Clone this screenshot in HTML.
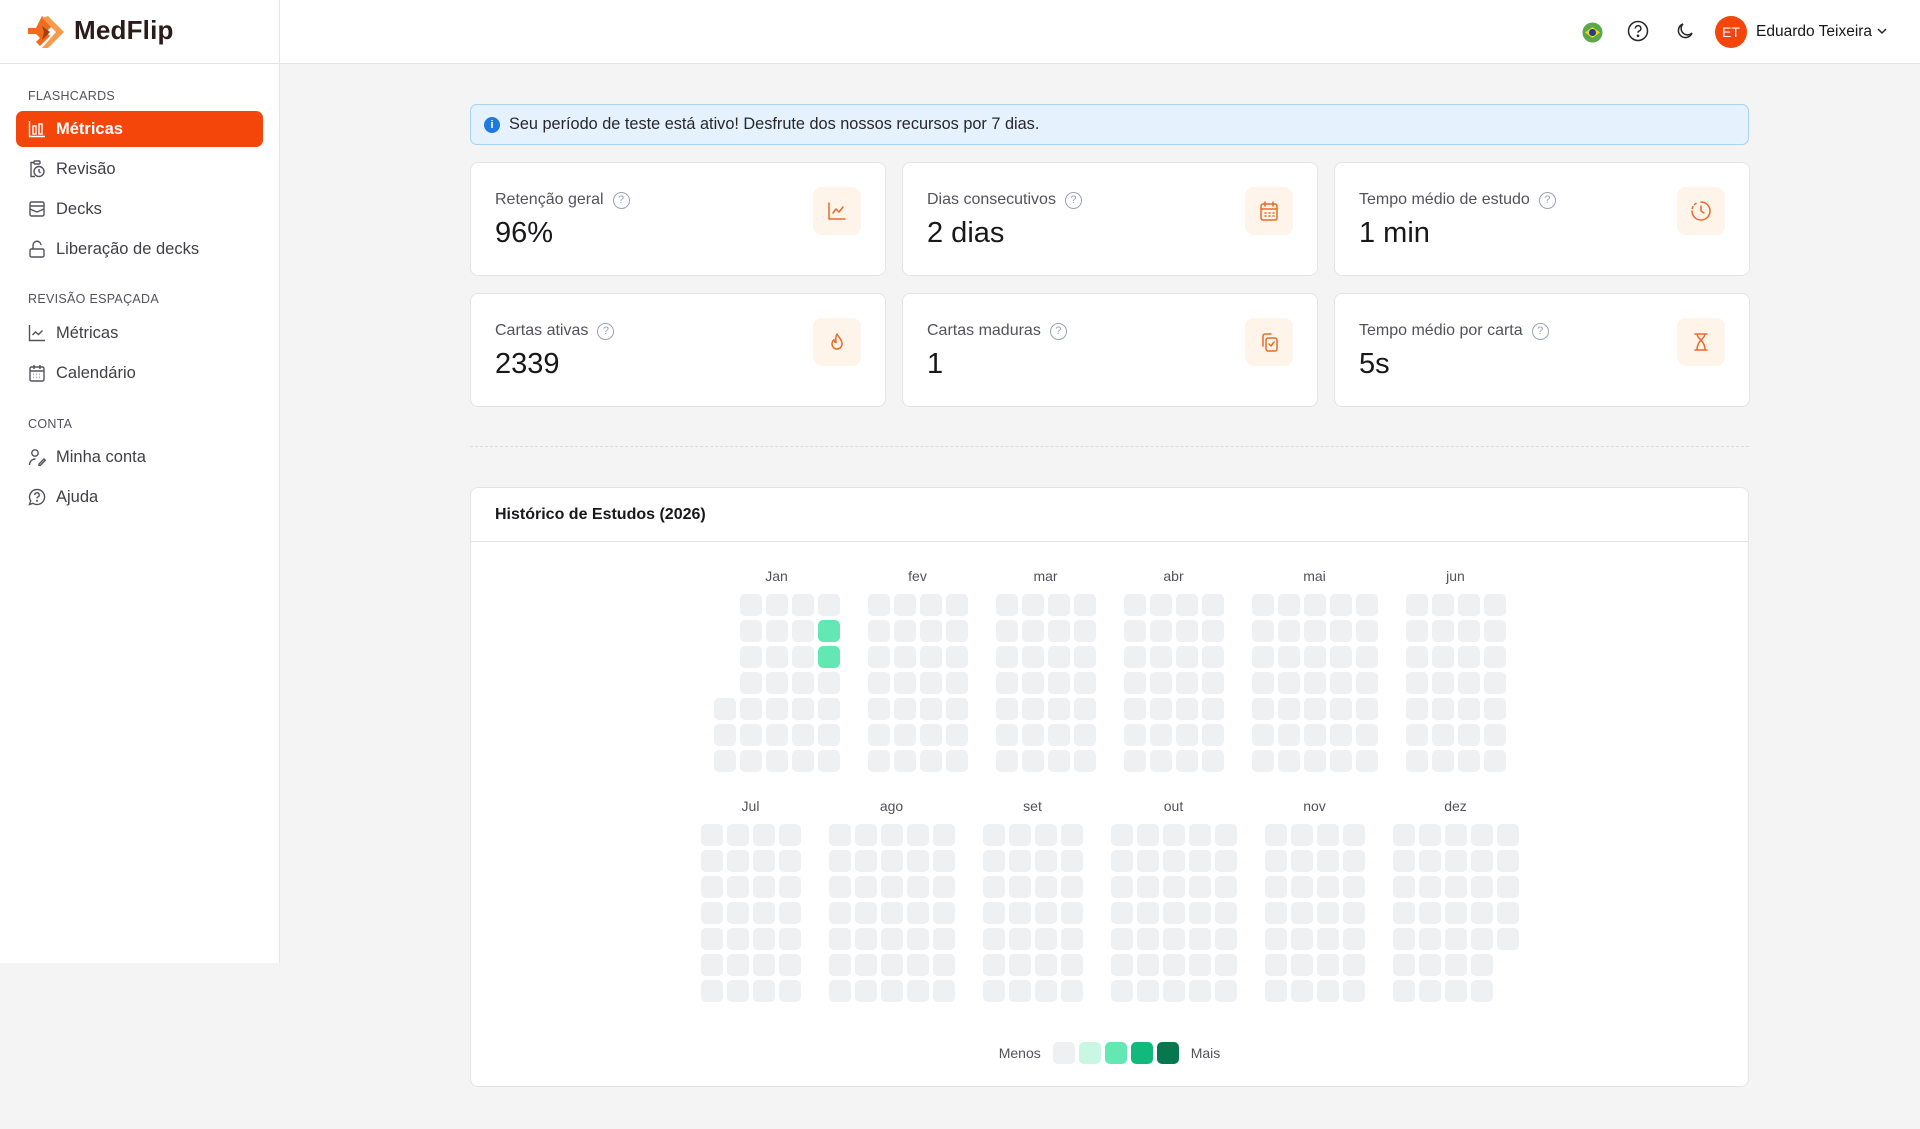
<!DOCTYPE html>
<html><head><meta charset="utf-8">
<style>
*{box-sizing:border-box;margin:0;padding:0}
body{width:1920px;height:1129px;background:#f4f4f5;font-family:"Liberation Sans",sans-serif;color:#27272a;position:relative;overflow:hidden}
.side{position:absolute;left:0;top:0;width:280px;height:963px;background:#fff;border-right:1px solid #e4e4e7}
.top{position:absolute;left:0;top:0;width:1920px;height:64px;background:#fff;border-bottom:1px solid #e4e4e7}
.sidehead{position:absolute;left:0;top:0;width:280px;height:64px;border-right:1px solid #e4e4e7;border-bottom:1px solid #e4e4e7;background:#fff}
.logo{position:absolute;left:26px;top:14px}
.logotxt{position:absolute;left:74px;top:15px;font-size:26px;font-weight:bold;color:#2b1b1b;letter-spacing:0.2px}
.sec{position:absolute;left:28px;font-size:12.5px;color:#52525b;letter-spacing:0.3px}
.item{position:absolute;left:16px;width:247px;height:36px;border-radius:7px;font-size:16.5px;color:#3f3f46;display:flex;align-items:center;padding-left:12px}
.item svg{width:18px;height:18px;margin-right:10px;fill:none;stroke:#52525b;stroke-width:1.4}
.item.act{background:#f4460b;color:#fff;font-weight:bold}
.item.act svg{stroke:#fff}
.banner{position:absolute;left:470px;top:104px;width:1279px;height:41px;background:#e5f2fd;border:1px solid #a8d3f2;border-radius:7px;display:flex;align-items:center;padding-left:13px;font-size:16.3px;color:#27272a}
.banner .i{width:16px;height:16px;border-radius:50%;background:#1f7ae0;color:#fff;font-size:11px;font-weight:bold;display:flex;align-items:center;justify-content:center;margin-right:9px}
.card{position:absolute;width:416px;height:114px;background:#fff;border:1px solid #e4e4e7;border-radius:8px}
.card .t{position:absolute;left:24px;top:28px;font-size:16px;color:#52525b;display:flex;align-items:center}
.card .q{display:inline-block;width:17px;height:17px;border:1.3px solid #9ca3af;border-radius:50%;font-size:11px;color:#9ca3af;text-align:center;line-height:15px;margin-left:9px}
.card .v{position:absolute;left:24px;top:54px;font-size:29px;color:#18181b}
.card .ic{position:absolute;right:24px;top:24px;width:48px;height:48px;background:#fff4ea;border-radius:9px;display:flex;align-items:center;justify-content:center}
.card .ic svg{width:22px;height:22px;fill:none;stroke:#ea6a2a;stroke-width:1.5;stroke-linecap:round;stroke-linejoin:round}
.dash{position:absolute;left:470px;top:446px;width:1279px;border-top:1px dashed #dcdce0}
.hist{position:absolute;left:470px;top:487px;width:1279px;height:600px;background:#fff;border:1px solid #e4e4e7;border-radius:8px}
.hist .h{height:54px;border-bottom:1px solid #e4e4e7;font-size:16px;font-weight:bold;padding:18px 24px;color:#18181b}
.row{position:absolute;left:0;width:100%;display:flex;justify-content:center;gap:28px}
.mon{display:flex;flex-direction:column;align-items:center}
.mon .l{font-size:14px;color:#52525b;height:18px;margin-bottom:8px}
.grid{display:grid;grid-template-rows:repeat(7,22px);grid-auto-flow:column;grid-auto-columns:22px;gap:4px}
.c{background:#eff0f2;border-radius:5px}
.c.h0{visibility:hidden}
.c.g{background:#63e8b4}
.leg{position:absolute;left:0;width:100%;top:554px;display:flex;justify-content:center;align-items:center;font-size:14px;color:#52525b}
.leg span.s{width:22px;height:22px;border-radius:5px;margin-right:4px;display:inline-block}
</style></head><body>
<div class="top"></div>
<div class="side"></div>
<div class="sidehead">
<svg class="logo" width="44" height="36" viewBox="0 0 44 36">
<path d="M16 2 L26 12 L20 18 L24 22 L14 32 L10 28 L14 24 L10 20 L2 20 L2 14 L10 14 Z" fill="#f26a1b"/>
<path d="M22 2 L38 18 L22 34 L16 34 L30 18 L16 4 Z" fill="#f79a4a"/>
<path d="M16 12 L24 18 L16 26 L18 18 Z" fill="#a83a12"/>
</svg>
<div class="logotxt">MedFlip</div>
</div>
<svg style="position:absolute;left:1582px;top:22px" width="21" height="21" viewBox="0 0 21 21"><circle cx="10.5" cy="10.5" r="10" fill="#5aa84a"/><path d="M3 10.5 L10.5 5 L18 10.5 L10.5 16Z" fill="#f5d21a"/><circle cx="10.5" cy="10.5" r="3.5" fill="#203c8a"/></svg>
<svg style="position:absolute;left:1627px;top:20px" width="22" height="22" viewBox="0 0 22 22" fill="none" stroke="#27272a" stroke-width="1.5"><circle cx="11" cy="11" r="9.5"/><path d="M8.3 8.5a2.8 2.8 0 1 1 3.8 2.6c-.8.3-1.1.9-1.1 1.7"/><circle cx="11" cy="15.8" r=".6" fill="#27272a"/></svg>
<svg style="position:absolute;left:1675px;top:22px" width="19" height="19" viewBox="0 0 19 19" fill="none" stroke="#27272a" stroke-width="1.5"><path d="M8 2a7 7 0 1 0 9 9A6 6 0 0 1 8 2z"/></svg>
<div style="position:absolute;left:1715px;top:16px;width:32px;height:32px;border-radius:50%;background:#f4460b;color:#fff;font-size:14px;display:flex;align-items:center;justify-content:center">ET</div>
<div style="position:absolute;left:1756px;top:23px;font-size:15.5px;color:#18181b">Eduardo Teixeira</div>
<svg style="position:absolute;left:1876px;top:27px" width="12" height="8" viewBox="0 0 12 8" fill="none" stroke="#27272a" stroke-width="1.5"><path d="M2 2l4 4 4-4"/></svg>

<div class="sec" style="top:89px">FLASHCARDS</div>
<div class="item act" style="top:111px"><svg viewBox="0 0 18 18"><path d="M1.5 1v15.5H17"/><rect x="5" y="6" width="3" height="8"/><rect x="11" y="4" width="3" height="10"/></svg>Métricas</div>
<div class="item" style="top:151px"><svg viewBox="0 0 18 18"><path d="M6 2.5H3v14h4"/><rect x="6" y="1" width="6" height="3" rx="1"/><circle cx="11" cy="11.5" r="5"/><path d="M11 9v2.5l1.5 1.5"/></svg>Revisão</div>
<div class="item" style="top:191px"><svg viewBox="0 0 18 18"><rect x="2" y="2" width="14" height="14" rx="1.5"/><path d="M2 6h14M2 9l7 3 7-3"/></svg>Decks</div>
<div class="item" style="top:231px"><svg viewBox="0 0 18 18"><rect x="2" y="9" width="14" height="8" rx="1.5"/><path d="M5 9V5.5a4 4 0 0 1 8-0.5"/></svg>Liberação de decks</div>
<div class="sec" style="top:292px">REVISÃO ESPAÇADA</div>
<div class="item" style="top:315px"><svg viewBox="0 0 18 18"><path d="M1.5 1v15.5H17"/><path d="M4.5 11l3-3 3 2.5 4-4"/></svg>Métricas</div>
<div class="item" style="top:355px"><svg viewBox="0 0 18 18"><rect x="2" y="3" width="14" height="14" rx="1.5"/><path d="M2 7h14M6 1v4M12 1v4"/><path d="M5.5 10.5h.5M8.5 10.5h.5M11.5 10.5h.5M5.5 13.5h.5M8.5 13.5h.5M11.5 13.5h.5"/></svg>Calendário</div>
<div class="sec" style="top:417px">CONTA</div>
<div class="item" style="top:439px"><svg viewBox="0 0 18 18"><circle cx="7" cy="5" r="3.2"/><path d="M1.5 17c0-3.5 2.5-6 6-6"/><path d="M11 16l5-5 1.3 1.3-5 5H11z"/></svg>Minha conta</div>
<div class="item" style="top:479px"><svg viewBox="0 0 18 18"><path d="M9 1.5a7.5 7.5 0 1 1-4 13.8L1.5 16.5l1.2-3.5A7.5 7.5 0 0 1 9 1.5z"/><path d="M6.8 7a2.2 2.2 0 1 1 3 2c-.6.3-.8.7-.8 1.4"/><circle cx="9" cy="12.8" r=".4"/></svg>Ajuda</div>

<div class="banner"><span class="i">i</span>Seu período de teste está ativo! Desfrute dos nossos recursos por 7 dias.</div>

<div class="card" style="left:470px;top:162px"><div class="t">Retenção geral<span class="q">?</span></div><div class="v">96%</div><div class="ic"><svg viewBox="0 0 22 22"><path d="M3 3v16h16"/><path d="M7 13l3-4 3 3 4-5"/></svg></div></div>
<div class="card" style="left:902px;top:162px"><div class="t">Dias consecutivos<span class="q">?</span></div><div class="v">2 dias</div><div class="ic"><svg viewBox="0 0 22 22"><rect x="3" y="4" width="16" height="16" rx="2"/><path d="M3 9h16M7 2v4M15 2v4M7 13h1M11 13h1M15 13h1M7 16h1M11 16h1M15 16h1"/></svg></div></div>
<div class="card" style="left:1334px;top:162px"><div class="t">Tempo médio de estudo<span class="q">?</span></div><div class="v">1 min</div><div class="ic"><svg viewBox="0 0 22 22"><path d="M11 2a9 9 0 1 1-9 9"/><path d="M2.2 8.5a9 9 0 0 1 5-5.8" stroke-dasharray="2 2.5"/><path d="M11 6v5l3 2"/></svg></div></div>
<div class="card" style="left:470px;top:293px"><div class="t">Cartas ativas<span class="q">?</span></div><div class="v">2339</div><div class="ic"><svg viewBox="0 0 22 22"><path d="M11 3c1 3 5 5 5 10a5 5 0 0 1-10 0c0-2 1-3.5 2-4.5 0 2 1 3 2 3 0-3-1-5 1-8.5z"/></svg></div></div>
<div class="card" style="left:902px;top:293px"><div class="t">Cartas maduras<span class="q">?</span></div><div class="v">1</div><div class="ic"><svg viewBox="0 0 22 22"><path d="M5 15V5a2 2 0 0 1 2-2h6"/><rect x="8" y="7" width="11" height="13" rx="2"/><path d="M11 13l2 2 3-4"/></svg></div></div>
<div class="card" style="left:1334px;top:293px"><div class="t">Tempo médio por carta<span class="q">?</span></div><div class="v">5s</div><div class="ic"><svg viewBox="0 0 22 22"><path d="M5 3h12M5 19h12M7 3c0 5 8 6 8 16M15 3c0 5-8 6-8 16"/></svg></div></div>

<div class="dash"></div>

<div class="hist">
<div class="h">Histórico de Estudos (2026)</div>
<div class="row" id="r1" style="top:80px"></div>
<div class="row" id="r2" style="top:310px"></div>
<div class="leg">Menos<span style="width:12px"></span><span class="s" style="background:#eff0f2"></span><span class="s" style="background:#c9f7e4"></span><span class="s" style="background:#63e8b4"></span><span class="s" style="background:#12b97c"></span><span class="s" style="background:#07774f"></span><span style="width:8px"></span>Mais</div>
</div>
<script>
var m1=[["Jan",5],["fev",4],["mar",4],["abr",4],["mai",5],["jun",4]];
var m2=[["Jul",4],["ago",5],["set",4],["out",5],["nov",4],["dez",5]];
function build(id,arr){var r=document.getElementById(id);arr.forEach(function(m){var d=document.createElement('div');d.className='mon';var h='<div class="l">'+m[0]+'</div><div class="grid">';for(var c=0;c<m[1];c++)for(var y=0;y<7;y++){var cl='c';if(m[0]=='Jan'&&c==0&&y<4)cl+=' h0';if(m[0]=='Jan'&&c==4&&(y==1||y==2))cl+=' g';if(m[0]=='dez'&&c==4&&y>4)cl+=' h0';h+='<div class="'+cl+'"></div>';}h+='</div>';d.innerHTML=h;r.appendChild(d);});}
build('r1',m1);build('r2',m2);
</script>
</body></html>
